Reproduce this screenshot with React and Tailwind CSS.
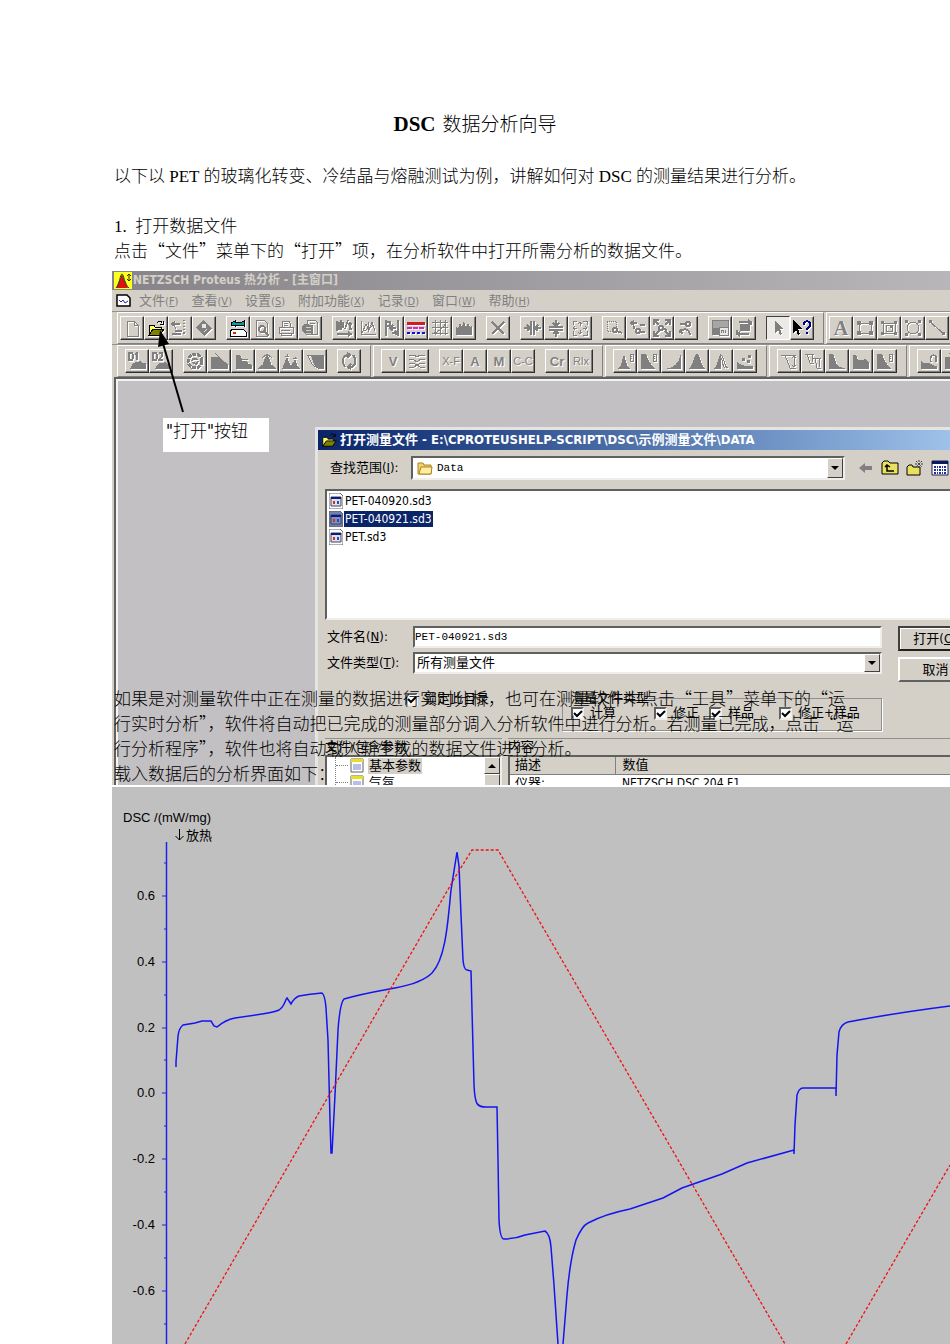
import clsx from "clsx";

const G = "#808080";

// All toolbar glyphs share an 18x18 canvas
const ICONS = {
  fresh: <path d="M4 2h7l4 4v11H4zM11 2v4h4" fill="none" stroke={G} />,
  open: (
    <>
      <path d="M2 6h5l1 2h6v3H6l-4 5z" fill="#ffff66" stroke="#000" />
      <path d="M6 10h11l-4 6H2z" fill="#808000" stroke="#000" />
      <path d="M10 4c2-3 4-2 5 0M16 2v3h-3" fill="none" stroke="#000" />
    </>
  ),
  exchange: (
    <path d="M1 5h8M4 3L1 5l3 2M4 12h7M4 9h1M1 15h9M13 1v1M13 4v1M13 7v1M13 10v1M13 13v2" fill="none" stroke={G} strokeWidth="2" />
  ),
  disk: (
    <>
      <path d="M8 1l9 8-8 8-8-8z" fill={G} />
      <path d="M7 5h3v3H7zM9 13l3-3" fill="#e8e6e0" stroke="#e8e6e0" />
    </>
  ),
  device: (
    <>
      <path d="M2 4l4-2v1h7l2-1v5l-2-1H6v1L2 6z" fill="#00a0a8" stroke="#000" />
      <path d="M3 10h11l3 3v4H1v-4z" fill="#fff" stroke="#000" />
      <path d="M4 14h3" stroke="#e02020" strokeWidth="2" />
    </>
  ),
  preview: (
    <>
      <path d="M3 1h8l3 3v13H3z" fill="none" stroke={G} />
      <circle cx="9" cy="10" r="3" fill="none" stroke={G} strokeWidth="2" />
      <path d="M11 12l5 5" stroke={G} strokeWidth="2" />
    </>
  ),
  print: (
    <path d="M5 8V2h7l1 2v4M2 8h14v6H2zM4 14v2h10v-2M7 4h4M7 6h4M4 11h9" fill="none" stroke={G} />
  ),
  copies: (
    <>
      <path d="M6 1h8l2 2v12H6z" fill="none" stroke={G} />
      <path d="M1 7l3-2 8 1v10H5l-4-4z" fill={G} />
      <path d="M5 8h5M5 11h5M5 14h5" stroke="#d4d0c8" />
      <path d="M9 4h5" stroke={G} />
    </>
  ),
  timeAxis: (
    <path d="M2 2v10M4 3v8M6 1v10M8 3v6M2 15h14M13 13l3 2-3 2M10 10l3-9M15 3v7h2M13 5h4" fill="none" stroke={G} strokeWidth="1.5" />
  ),
  tempAxis: (
    <path d="M2 2v13h15M3 14l4-9 3 6 3-8 3 9M9 3v10M5 12l10-6" fill="none" stroke={G} />
  ),
  shift: (
    <path d="M3 1v16M3 3h4v4H3M15 1v16M7 9h6M10 6l-3 3 3 3M9 14h5M12 12l2 2-2 2" fill="none" stroke={G} strokeWidth="2" />
  ),
  lines: (
    <>
      <path d="M0 4h18" stroke="#cc2020" strokeWidth="3" />
      <path d="M0 9h18" stroke="#e020d0" strokeWidth="2" strokeDasharray="5 1" />
      <path d="M0 14h18" stroke="#1010d0" strokeWidth="2" strokeDasharray="3 2" />
    </>
  ),
  grid: (
    <path d="M1 3h16M1 8h16M1 14h16M4 1v15M9 1v15M14 1v15M3 14c5-1 8-4 13-11" fill="none" stroke={G} />
  ),
  ridges: <path d="M1 16V8l2 1 2-5 2 4 2-6 2 6 2-4 2 4 2-1v9z" fill={G} />,
  cross: <path d="M3 3l12 12M15 3L3 15" stroke={G} strokeWidth="2" />,
  squeezeH: (
    <path d="M8 2v14M11 2v14M1 9h6M4 6l3 3-3 3M18 9h-6M15 6l-3 3 3 3" fill="none" stroke={G} strokeWidth="2" />
  ),
  squeezeV: (
    <path d="M2 8h14M2 11h14M9 1v6M6 4l3 3 3-3M9 18v-6M6 15l3-3 3 3" fill="none" stroke={G} strokeWidth="2" />
  ),
  expand: (
    <path d="M2 6V2h4M12 2h4v4M16 12v4h-4M6 16H2v-4M9 3v4M7 5l2-2 2 2M9 15v-4M7 13l2 2 2-2M2 9h4M4 7L2 9l2 2M16 9h-4M14 7l2 2-2 2" fill="none" stroke={G} />
  ),
  zoomBox: (
    <>
      <path d="M2 2h9v10H2z" fill="none" stroke={G} strokeDasharray="1 1" />
      <circle cx="10" cy="11" r="2" fill="none" stroke={G} strokeWidth="2" />
      <path d="M12 12l5 2" stroke={G} strokeWidth="2" />
    </>
  ),
  zoomStep: (
    <>
      <path d="M2 4h6M5 2L2 4l3 2M5 7v3M11 6h5" fill="none" stroke={G} strokeWidth="2" />
      <circle cx="9" cy="12" r="2" fill="none" stroke={G} strokeWidth="2" />
      <path d="M11 13h5" stroke={G} strokeWidth="2" />
    </>
  ),
  zoomAll: (
    <>
      <path d="M2 2l4 4M16 2l-4 4M2 16l4-4M16 16l-4-4M1 6V1h5M12 1h5v5M1 12v5h5M17 12v5h-5" fill="none" stroke={G} strokeWidth="1.5" />
      <circle cx="8" cy="9" r="2" fill="none" stroke={G} strokeWidth="2" />
      <path d="M10 9l4 2" stroke={G} strokeWidth="2" />
    </>
  ),
  zoomBack: (
    <>
      <circle cx="11" cy="5" r="2" fill="none" stroke={G} strokeWidth="2" />
      <path d="M9 5H3M4 10l-1 3 3 1M3 13c3-4 9-4 10 3" fill="none" stroke={G} strokeWidth="2" />
    </>
  ),
  panels: (
    <>
      <path d="M1 1h16v8H1z" fill="#a8a6a2" stroke={G} />
      <path d="M1 9h7v7H1z" fill={G} />
      <path d="M8 8h9v8H8z" fill="#e8e6e0" stroke={G} />
      <path d="M10 14v-3h2v3M14 11v3" fill="none" stroke={G} />
    </>
  ),
  swap: (
    <>
      <path d="M5 5h10v7H5z" fill={G} />
      <path d="M4 3h12v3M13 1l3 2-3 2M14 15H2v-4M5 13l-3 2 3 2" fill="none" stroke={G} strokeWidth="1.5" />
    </>
  ),
  pointer: <path d="M6 2v12l3-3 2 5 2-1-2-5h4z" fill={G} />,
  help: (
    <>
      <path d="M0 1v13l3-3 2 5 2-1-2-5h4z" fill="#000" />
      <path d="M11 6c0-5 6-5 6 0 0 3-3 2-3 5M14 13v2" fill="none" stroke="#000080" strokeWidth="2" />
    </>
  ),
  rect: (
    <>
      <path d="M3 4h12v10H3z" fill="none" stroke={G} />
      <path d="M1 2h4v4H1zM13 2h4v4h-4zM1 12h4v4H1zM13 12h4v4h-4z" fill={G} />
    </>
  ),
  roundRect: (
    <>
      <path d="M3 4h12v10H3zM6 6h6v6H6z" fill="none" stroke={G} />
      <path d="M1 2h3v3H1zM14 2h3v3h-3zM1 13h3v3H1zM14 13h3v3h-3zM10 6h3v3h-3z" fill={G} />
    </>
  ),
  circle: (
    <>
      <circle cx="9" cy="9" r="6" fill="none" stroke={G} />
      <path d="M1 1h3v3H1zM14 1h3v3h-3zM1 14h3v3H1zM14 14h3v3h-3z" fill={G} />
    </>
  ),
  line: (
    <>
      <path d="M2 3l14 12" stroke={G} />
      <path d="M1 1h3v3H1zM14 13h3v3h-3z" fill={G} />
    </>
  ),
  d1: (
    <>
      <path d="M1 8V1h3l1 2v3L4 8zM7 3l2-2v7" fill="none" stroke={G} strokeWidth="1.5" />
      <path d="M2 17c2-5 4-7 7-7l3-1 2 2h4v6z" fill={G} />
    </>
  ),
  d2: (
    <>
      <path d="M1 8V1h3l1 2v3L4 8zM7 1h3v3L7 8h4" fill="none" stroke={G} strokeWidth="1.5" />
      <path d="M3 17c3-5 4-7 7-6l3-1 2 2h3v5z" fill={G} />
    </>
  ),
  gear: (
    <>
      <circle cx="9" cy="9" r="7" fill="none" stroke={G} strokeWidth="3" strokeDasharray="4 1" />
      <path d="M6 9c1-3 4-3 5-1M12 9c-1 4-4 3-5 1" fill="none" stroke={G} strokeWidth="2" />
    </>
  ),
  stepDown: <path d="M1 16V6l4-1 4 1 8 6v4zM5 1l7 7" fill={G} stroke={G} />,
  stairs: <path d="M2 16V3l4 1 2 5h4l2 3 3 1v3zM7 7h7" fill={G} stroke={G} />,
  peak: (
    <>
      <path d="M1 16l4-3 4-11 4 11 4 3z" fill={G} stroke={G} />
      <path d="M4 6l5-4 5 4" fill="none" stroke={G} />
    </>
  ),
  twoPeaks: (
    <path d="M1 16l4-10 3 8 2-1 3-5 2 6 2 2zM5 2v2M3 4h4M13 5v2M11 6h4" fill={G} stroke={G} />
  ),
  trapezoid: (
    <>
      <path d="M5 3h12v13h-5C7 14 7 8 5 3z" fill={G} />
      <path d="M1 3h16v13h-5C5 14 4 8 2 3" fill="none" stroke={G} />
    </>
  ),
  refresh: (
    <path d="M5 15C1 9 3 3 9 3M13 3c4 5 3 12-3 12M7 1l3 2-3 3M11 12l-3 3 3 2" fill="none" stroke={G} strokeWidth="2" />
  ),
  waves: (
    <path d="M1 3h5l3 2 3-2h5M1 7h4l4 3 4-3h4M1 11h4l4 2 4-2h4M1 15h5l3-2 3 2h5" fill="none" stroke={G} />
  ),
  peakRuler: (
    <>
      <path d="M1 17l4-4 3-11 3 11 3 4z" fill={G} />
      <path d="M14 2h3v7h-3zM14 4h2M14 6h2" fill="none" stroke={G} />
    </>
  ),
  decayRuler: (
    <>
      <path d="M1 17V2h5c2 6 5 12 10 15z" fill={G} />
      <path d="M13 2h3v7h-3zM13 4h2M13 6h2" fill="none" stroke={G} />
    </>
  ),
  rise: <path d="M1 17c9-1 14-6 16-15v15z" fill={G} />,
  bell: <path d="M0 17c5-1 5-14 9-15 4 1 4 14 9 15z" fill={G} />,
  halfBell: (
    <>
      <path d="M1 17c5-1 5-14 8-15v15z" fill={G} />
      <path d="M9 3c3 1 3 13 7 13M9 6c2 2 1 8 4 10" fill="none" stroke={G} />
    </>
  ),
  dots: (
    <>
      <path d="M1 17V9c3 5 8 5 16 5v3z" fill={G} />
      <path d="M6 6h3v3H6zM11 8h3v3h-3zM12 3h3v3h-3z" fill={G} />
    </>
  ),
  drop: (
    <path d="M1 3h15M5 3l5 13h6M14 4v11M12 6l2-2 2 2M12 13l2 2 2-2" fill="none" stroke={G} />
  ),
  drops: (
    <path d="M1 2h9M3 2l3 9h4M8 3v7M8 6h9M11 6l2 10h4M15 7v8" fill="none" stroke={G} />
  ),
  decay: <path d="M1 17V2h4c2 5 3 11 6 13l6 1v1z" fill={G} />,
  plateau: <path d="M1 17V3h3l2 5h5l2-1 4 3v7z" fill={G} />,
  peakHand: (
    <>
      <path d="M1 17V8c3 6 5 1 7 3 2-1 4 3 9 3v3z" fill={G} />
      <path d="M11 10c-2-6 3-9 5-5v5" fill="none" stroke={G} strokeWidth="1.5" />
    </>
  ),
};

function Tool({ name, label, serif, bold, pressed }) {
  const shape = ICONS[name];

  return (
    <button
      type="button"
      aria-label={name || label}
      className={clsx(
        "flex h-6 w-6 shrink-0 items-center justify-center border text-[#808080]",
        pressed
          ? "border-t-[#404040] border-r-white border-b-white border-l-[#404040] bg-[#eceae6]"
          : "border-t-white border-r-[#303030] border-b-[#303030] border-l-white bg-[#d4d0c8] shadow-[inset_-1px_-1px_0_#808080]"
      )}
    >
      {shape ? (
        <svg
          viewBox="0 0 18 18"
          shapeRendering="crispEdges"
          className="h-[18px] w-[18px] drop-shadow-[1px_1px_0_#ffffff]"
        >
          {shape}
        </svg>
      ) : (
        <span
          className={clsx(
            "[text-shadow:1px_1px_0_#fff]",
            serif
              ? "font-['Liberation_Serif',serif] text-[20px] font-bold"
              : "font-['Liberation_Sans',sans-serif]",
            !serif && (bold ? "text-[13px] font-bold" : "text-[11px]")
          )}
        >
          {label}
        </span>
      )}
    </button>
  );
}

const ROW_ONE = [
  [
    [{ name: "fresh" }, { name: "open" }, { name: "exchange" }, { name: "disk" }],
    [{ name: "device" }, { name: "preview" }, { name: "print" }, { name: "copies" }],
    [{ name: "timeAxis" }, { name: "tempAxis" }, { name: "shift" }, { name: "lines" }, { name: "grid" }, { name: "ridges" }],
    [{ name: "cross" }],
    [{ name: "squeezeH" }, { name: "squeezeV" }, { name: "expand" }],
    [{ name: "zoomBox" }, { name: "zoomStep" }, { name: "zoomAll" }, { name: "zoomBack" }],
    [{ name: "panels" }, { name: "swap" }],
    [{ name: "pointer", pressed: true }, { name: "help" }],
  ],
  [[{ label: "A", serif: true }, { name: "rect" }, { name: "roundRect" }, { name: "circle" }, { name: "line" }]],
];

const ROW_TWO = [
  [
    [{ name: "d1" }, { name: "d2" }],
    [{ name: "gear" }, { name: "stepDown" }, { name: "stairs" }, { name: "peak" }, { name: "twoPeaks" }, { name: "trapezoid" }],
    [{ name: "refresh" }],
  ],
  [
    [{ label: "V", bold: true }, { name: "waves" }],
    [{ label: "X-F" }, { label: "A", bold: true }, { label: "M", bold: true }, { label: "C-C" }],
    [{ label: "Cr", bold: true }, { label: "Rlx" }],
  ],
  [[{ name: "peakRuler" }, { name: "decayRuler" }, { name: "rise" }, { name: "bell" }, { name: "halfBell" }, { name: "dots" }]],
  [[{ name: "drop" }, { name: "drops" }, { name: "decay" }, { name: "plateau" }, { name: "decayRuler" }]],
  [[{ name: "peakHand" }, { name: "stepDown" }]],
];

function ToolbarRow({ bars, tight }) {
  return (
    <div className="flex h-[33px] gap-[2px] border-t border-[#909090] pl-[5px]">
      {bars.map((groups, i) => (
        <div
          key={i}
          className={clsx(
            "flex shrink-0 items-center gap-[10px] border border-t-white border-r-[#808080] border-b-[#808080] border-l-white pr-[9px]",
            tight ? "pl-[2px]" : "pl-[7px]"
          )}
        >
          {groups.map((tools, j) => (
            <div key={j} className="flex">
              {tools.map((tool, k) => (
                <Tool key={k} {...tool} />
              ))}
            </div>
          ))}
        </div>
      ))}
    </div>
  );
}

const MENU = [
  ["文件", "F"],
  ["查看", "V"],
  ["设置", "S"],
  ["附加功能", "X"],
  ["记录", "D"],
  ["窗口", "W"],
  ["帮助", "H"],
];

function FolderOpen() {
  return (
    <svg viewBox="0 0 18 18" className="h-4 w-4 shrink-0">
      {ICONS.open}
    </svg>
  );
}

function FileIcon({ selected }) {
  return (
    <svg viewBox="0 0 14 16" className="h-4 w-[14px] shrink-0">
      <path d="M0 0h11l3 3v13H0z" fill={selected ? "#7080b0" : "#fff"} stroke="#606060" />
      <path d="M2 4h10v9H2z" fill={selected ? "#8090c0" : "#e0e0e8"} stroke="#404060" />
      <path d="M2 4h10v2H2z" fill="#0a1a80" />
      <path d="M4 8h2v3H4z" fill="#d03030" />
      <path d="M8 8h2v3H8z" fill="#2050c0" />
    </svg>
  );
}

function DropArrow() {
  return (
    <span className="pointer-events-none absolute top-[2px] right-[2px] bottom-[2px] flex w-4 items-center justify-center border border-t-white border-r-[#404040] border-b-[#404040] border-l-white bg-[#d4d0c8]">
      <svg viewBox="0 0 8 4" className="h-1 w-2">
        <path d="M0 0h8L4 4z" />
      </svg>
    </span>
  );
}

const SUNKEN =
  "border-2 border-t-[#606060] border-r-[#f0eeea] border-b-[#f0eeea] border-l-[#606060] bg-white";

const FILES = ["PET-040920.sd3", "PET-040921.sd3", "PET.sd3"];

function Check({ id, children }) {
  return (
    <span className="flex items-center gap-[6px]">
      <span className="relative flex">
        <input
          id={id}
          type="checkbox"
          defaultChecked
          className="peer h-[13px] w-[13px] appearance-none border-2 border-t-[#606060] border-r-[#f0eeea] border-b-[#f0eeea] border-l-[#606060] bg-white"
        />
        <svg viewBox="0 0 13 13" className="pointer-events-none absolute inset-0 hidden peer-checked:block">
          <path d="M3 6l3 3 5-5" fill="none" stroke="#000" strokeWidth="2" />
        </svg>
      </span>
      <label htmlFor={id}>{children}</label>
    </span>
  );
}

function OpenDialog() {
  return (
    <section
      aria-label="打开测量文件"
      className="mt-12 -mr-8 ml-[46px] min-w-0 flex-1 border-[3px] border-r-0 border-b-0 border-[#e6e4e0] bg-[#d4d0c8] text-[13px] leading-4 whitespace-nowrap text-black"
    >
      <h3 className="flex h-5 items-center gap-[3px] bg-linear-to-r from-[#0a246a] to-[#a6caf0] pl-[3px] font-bold text-white">
        <FolderOpen />
        打开测量文件 - E:\CPROTEUSHELP-SCRIPT\DSC\示例测量文件\DATA
      </h3>

      <div className="mt-[6px] flex h-6 items-center pl-3">
        <label htmlFor="look-in" className="w-[81px]">
          查找范围(<u>I</u>):
        </label>
        <div className="relative flex h-6 min-w-0 flex-1 items-center">
          <select
            id="look-in"
            className={clsx(SUNKEN, "h-6 w-full appearance-none pl-6 font-['Liberation_Mono',monospace] text-[11px]")}
          >
            <option>Data</option>
          </select>
          <svg viewBox="0 0 16 14" className="pointer-events-none absolute left-[6px] h-[14px] w-4">
            <path d="M1 2h5l1 2h7v9H1z" fill="#f0d070" stroke="#b08020" />
            <path d="M4 6h11l-1 7H2z" fill="#fff0a0" stroke="#b08020" />
          </svg>
          <DropArrow />
        </div>
        <div className="flex w-[137px] items-center gap-[7px] pl-[13px]">
          <button type="button" aria-label="后退">
            <svg viewBox="0 0 16 16" className="h-4 w-4">
              <path d="M1 8l6-5v3h7v4H7v3z" fill="#808080" />
            </svg>
          </button>
          <button type="button" aria-label="向上一级">
            <svg viewBox="0 0 18 16" className="h-4 w-[18px]">
              <path d="M1 3l2-2h4l2 2h8v11H1z" fill="#e8e060" stroke="#000" />
              <path d="M6 5v6h7M4 7l2-2 3 2" fill="none" stroke="#000" strokeWidth="1.5" />
            </svg>
          </button>
          <button type="button" aria-label="新建文件夹">
            <svg viewBox="0 0 18 16" className="h-4 w-[18px]">
              <path d="M1 7l2-2h3l1 2h7v8H1z" fill="#e8e060" stroke="#000" />
              <path d="M13 0v8M9 4h9M10 1l6 6M16 1l-6 6" stroke="#404040" strokeDasharray="2 1" />
            </svg>
          </button>
          <button type="button" aria-label="查看">
            <svg viewBox="0 0 18 16" className="h-4 w-[18px]">
              <path d="M1 1h16v14H1z" fill="#fff" stroke="#202040" />
              <path d="M1 1h16v3H1z" fill="#0a1a60" />
              <path d="M3 7h12M3 10h12M3 13h12" stroke="#2030a0" strokeWidth="2" strokeDasharray="2 1 1 1" />
            </svg>
          </button>
        </div>
      </div>

      <ul className={clsx(SUNKEN, "mt-[9px] ml-[7px] h-[131px] pt-px text-[12px]")}>
        {FILES.map((file, i) => (
          <li key={file} className="flex h-[18px] items-center gap-px pl-[2px]">
            <FileIcon selected={i === 1} />
            <span className={clsx("px-px", i === 1 && "bg-[#0a246a] text-white")}>{file}</span>
          </li>
        ))}
      </ul>

      <div className="mt-[6px] flex pr-[9px] pl-[9px]">
        <div className="min-w-0 flex-1">
          <div className="flex h-[22px] items-center">
            <label htmlFor="file-name" className="w-[86px]">
              文件名(<u>N</u>):
            </label>
            <input
              id="file-name"
              defaultValue="PET-040921.sd3"
              className={clsx(SUNKEN, "h-[22px] min-w-0 flex-1 font-['Liberation_Mono',monospace] text-[11px]")}
            />
          </div>
          <div className="mt-1 flex h-[22px] items-center">
            <label htmlFor="file-type" className="w-[86px]">
              文件类型(<u>T</u>):
            </label>
            <div className="relative min-w-0 flex-1">
              <select id="file-type" className={clsx(SUNKEN, "block h-[22px] w-full appearance-none pl-[2px]")}>
                <option>所有测量文件</option>
              </select>
              <DropArrow />
            </div>
          </div>
          <div className="mt-[17px] flex items-start pl-[78px]">
            <div className="w-[157px]">
              <Check id="lock-dir">锁定此目录</Check>
            </div>
            <fieldset className="h-10 min-w-0 flex-1 border border-[#909090] px-2 shadow-[1px_1px_0_#fff]">
              <legend className="leading-[14px]">测量文件类型</legend>
              <div className="grid grid-cols-[83px_55px_70px_auto]">
                <Check id="type-calc">计算</Check>
                <Check id="type-corr">修正</Check>
                <Check id="type-sample">样品</Check>
                <Check id="type-both">修正+样品</Check>
              </div>
            </fieldset>
          </div>
        </div>
        <div className="ml-4 flex w-[75px] flex-col gap-[6px]">
          <button
            type="button"
            className="h-[25px] border-2 border-t-[#404040] border-r-[#202020] border-b-[#202020] border-l-[#404040] shadow-[inset_1px_1px_0_#fff]"
          >
            打开(<u>O</u>)
          </button>
          <button
            type="button"
            className="h-[25px] border-2 border-t-white border-r-[#404040] border-b-[#606060] border-l-white"
          >
            取消
          </button>
        </div>
      </div>

      <div className="mt-[7px] flex gap-[6px] pl-[7px]">
        <div className="w-[177px]">
          <h4 className="h-[17px] border-t border-[#909090]">文件/包含参数</h4>
          <div className={clsx(SUNKEN, "flex h-[60px] justify-between")}>
            <ul className="ml-2 border-l border-dotted border-[#808080]">
              {["基本参数", "气氛"].map((item, i) => (
                <li key={item} className="flex h-[17px] items-center gap-[2px]">
                  <span className="w-3 border-t border-dotted border-[#808080]" />
                  <svg viewBox="0 0 14 15" className="h-[15px] w-[14px]">
                    <path d="M1 1h12v13H1z" fill="#fff" stroke="#606060" />
                    <path d="M1 1h12v3H1z" fill="#e8e020" />
                    <path d="M3 7h8M3 9h8M3 11h8" stroke="#7080d0" />
                  </svg>
                  <span className={clsx("ml-[2px] px-px", i === 0 && "bg-[#d4d0c8]")}>{item}</span>
                </li>
              ))}
            </ul>
            <div className="w-4 bg-[#e8e6e2]">
              <button
                type="button"
                aria-label="向上滚动"
                className="flex h-[17px] w-4 items-center justify-center border border-t-white border-r-[#404040] border-b-[#404040] border-l-white bg-[#d4d0c8]"
              >
                <svg viewBox="0 0 8 4" className="h-1 w-2">
                  <path d="M0 4h8L4 0z" />
                </svg>
              </button>
              <div className="h-10 border border-t-white border-r-[#404040] border-l-white bg-[#d4d0c8]" />
            </div>
          </div>
        </div>
        <div className="min-w-0 flex-1">
          <h4 className="h-[17px] border-t border-[#909090]">内容</h4>
          <div className={clsx(SUNKEN, "h-[60px]")}>
            <table className="w-full border-collapse text-left">
              <thead>
                <tr className="h-[17px] border-b border-[#808080] bg-[#d4d0c8]">
                  <th className="w-[105px] border-r border-[#808080] pl-[5px] font-normal">描述</th>
                  <th className="pl-[7px] font-normal">数值</th>
                </tr>
              </thead>
              <tbody>
                <tr>
                  <td className="pl-[5px]">仪器:</td>
                  <td className="pl-[7px] text-[12px]">NETZSCH DSC 204 F1</td>
                </tr>
              </tbody>
            </table>
          </div>
        </div>
      </div>
    </section>
  );
}

function ProteusWindow() {
  return (
    <div className="relative overflow-hidden bg-[#d4d0c8] font-['DejaVu_Sans_Condensed','Noto_Sans_CJK_SC',sans-serif] font-normal">
      <h2 className="flex h-[19px] items-center gap-px bg-linear-to-r from-[#868488] to-[#b8b6b9] pl-[2px] text-[12px] font-bold whitespace-nowrap text-[#d4d0c8]">
        <svg viewBox="0 0 18 17" className="h-[17px] w-[18px]">
          <path d="M0 0h18v17H0z" fill="#ffff20" />
          <path d="M2 16L8 2l6 14z" fill="#e01010" />
          <path d="M2 16C6 12 6 2 8 2s2 10 7 14" fill="none" stroke="#006020" />
          <path d="M15 2v7M13 4l2-2 2 2M13 7l2 2 2-2" fill="none" stroke="#303000" />
        </svg>
        NETZSCH Proteus 热分析 - [主窗口]
      </h2>

      <nav className="flex h-[21px] items-center gap-[13px] pl-1 text-[13px] whitespace-nowrap text-[#808080]">
        <svg viewBox="0 0 15 13" className="-mr-[5px] h-[13px] w-[15px]">
          <path d="M1 1h10l3 3v8H1z" fill="#fff" stroke="#000" strokeWidth="1.5" />
          <path d="M3 6l2 2 2-2 2 3 3-2" fill="none" stroke="#2020a0" />
        </svg>
        {MENU.map(([text, key]) => (
          <button key={text} type="button">
            {text}
            <span className="text-[11px]">
              (<u>{key}</u>)
            </span>
          </button>
        ))}
      </nav>

      <ToolbarRow bars={ROW_ONE} tight />
      <ToolbarRow bars={ROW_TWO} />

      <div className="ml-[2px] flex h-[408px] items-start overflow-hidden border-t-2 border-l-2 border-[#606060] bg-[#c3c0c3] shadow-[inset_2px_2px_0_#f4f4f4]">
        <p className="mt-[39px] ml-[47px] h-[34px] w-[106px] shrink-0 bg-white px-[3px] text-[17px] leading-[26px] font-light whitespace-nowrap text-black">
          "打开"按钮
        </p>
        <OpenDialog />
      </div>

      <svg viewBox="0 0 40 90" className="pointer-events-none absolute top-[55px] left-10 h-[90px] w-10">
        <path d="M10 14l21 72" stroke="#000" strokeWidth="2" />
        <path d="M8 4l9 14-11 3z" />
      </svg>
    </div>
  );
}

const MAJOR_TICKS = [
  [896, "0.6"],
  [962, "0.4"],
  [1028, "0.2"],
  [1093, "0.0"],
  [1159, "-0.2"],
  [1225, "-0.4"],
  [1291, "-0.6"],
];
const MINOR_TICKS = [863, 929, 995, 1060, 1126, 1192, 1258, 1324];

const DSC_CURVE =
  "M176 1067V1062L178 1036Q179 1028 183 1025L195 1023L202 1021H211L214 1026L217 1027Q225 1020 235 1018L262 1014Q275 1012 279 1010C285 1006 285 1000 287 998L291 1004Q294 998 299 996Q310 994 322 993Q325 995 326 1008L328 1040L330 1120L331 1153H332L335 1095L338 1030Q340 1003 344 999C365 993 385 990 395 988Q422 983 432 973C446 958 448 920 451 890L457 852L459 866L461 915L463 960Q464 970 467 970L471 971L472 1010L474 1085C475 1105 477 1107 486 1107H497L498 1160L499 1220Q500 1239 504 1239Q515 1239 525 1235L545 1231Q550 1234 551 1247L554 1285L558 1344M563 1344L567 1295Q570 1260 576 1240Q582 1226 588 1223Q605 1214 630 1209L663 1198L682 1188L722 1174L747 1163L794 1150V1154L795 1125L797 1095Q799 1088 803 1088H836V1096L837 1055L839 1032Q841 1024 848 1022Q895 1013 950 1006";

function DscChart() {
  return (
    <svg
      viewBox="112 787 838 557"
      preserveAspectRatio="xMinYMin slice"
      role="img"
      aria-label="DSC /(mW/mg)"
      className="mt-[2px] block h-[557px] w-full bg-[#c0c0c0] font-['Liberation_Sans','Noto_Sans_CJK_SC',sans-serif] text-[13px] font-normal"
    >
      <text x="123" y="822">DSC /(mW/mg)</text>
      <text x="186" y="840">放热</text>
      <path d="M179.500 829v11M175.500 836l4 4 4-4" fill="none" stroke="#000" />
      <path d="M166.500 842V1344" stroke="#2020e8" strokeWidth="1.500" />
      {MAJOR_TICKS.map(([y, label]) => (
        <g key={y}>
          <path d={`M162 ${y}H167`} stroke="#2020e8" />
          <text x="155" y={y + 4} textAnchor="end">
            {label}
          </text>
        </g>
      ))}
      {MINOR_TICKS.map((y) => (
        <path key={y} d={`M164 ${y}H167`} stroke="#2020e8" />
      ))}
      <path d={DSC_CURVE} fill="none" stroke="#1414f0" strokeWidth="1.500" />
      <path
        d="M185 1344L457 874L472 850H498L785 1344M846 1344L950 1165"
        fill="none"
        stroke="#f01010"
        strokeDasharray="3 2"
        strokeWidth="1.300"
      />
    </svg>
  );
}

function Latin({ children }) {
  return <span className="font-['Liberation_Serif',serif] leading-4">{children}</span>;
}

export default function App() {
  return (
    <main
      lang="zh-CN"
      className="overflow-hidden bg-white pt-[110px] font-['Noto_Sans_CJK_SC',sans-serif] text-[17px] leading-[25px] font-light text-black"
    >
      <h1 className="text-center text-[19px] leading-[25px]">
        <span className="mr-[7px] font-['Liberation_Serif',serif] text-[21px] leading-4 font-bold">DSC</span>
        数据分析向导
      </h1>

      <div className="pl-28">
        <div className="mt-[27px] pl-[2px] whitespace-nowrap">
          <p>
            以下以<Latin> PET </Latin>的玻璃化转变、冷结晶与熔融测试为例，讲解如何对<Latin> DSC </Latin>
            的测量结果进行分析。
          </p>
          <h2 className="mt-[25px]">
            <Latin>1.&nbsp; </Latin>打开数据文件
          </h2>
          <p>点击“文件”菜单下的“打开”项，在分析软件中打开所需分析的数据文件。</p>
        </div>

        <div className="relative mt-[9px]">
          <ProteusWindow />
          {/* this text runs over the lower part of the window */}
          <div className="absolute bottom-0 left-[2px] whitespace-nowrap">
            <p>
              如果是对测量软件中正在测量的数据进行实时分析，也可在测量软件中点击“工具”菜单下的“运
              <br />
              行实时分析”，软件将自动把已完成的测量部分调入分析软件中进行分析。若测量已完成，点击“运
              <br />
              行分析程序”，软件也将自动载入新生成的数据文件进行分析。
            </p>
            <p>载入数据后的分析界面如下：</p>
          </div>
        </div>

        <DscChart />
      </div>
    </main>
  );
}
